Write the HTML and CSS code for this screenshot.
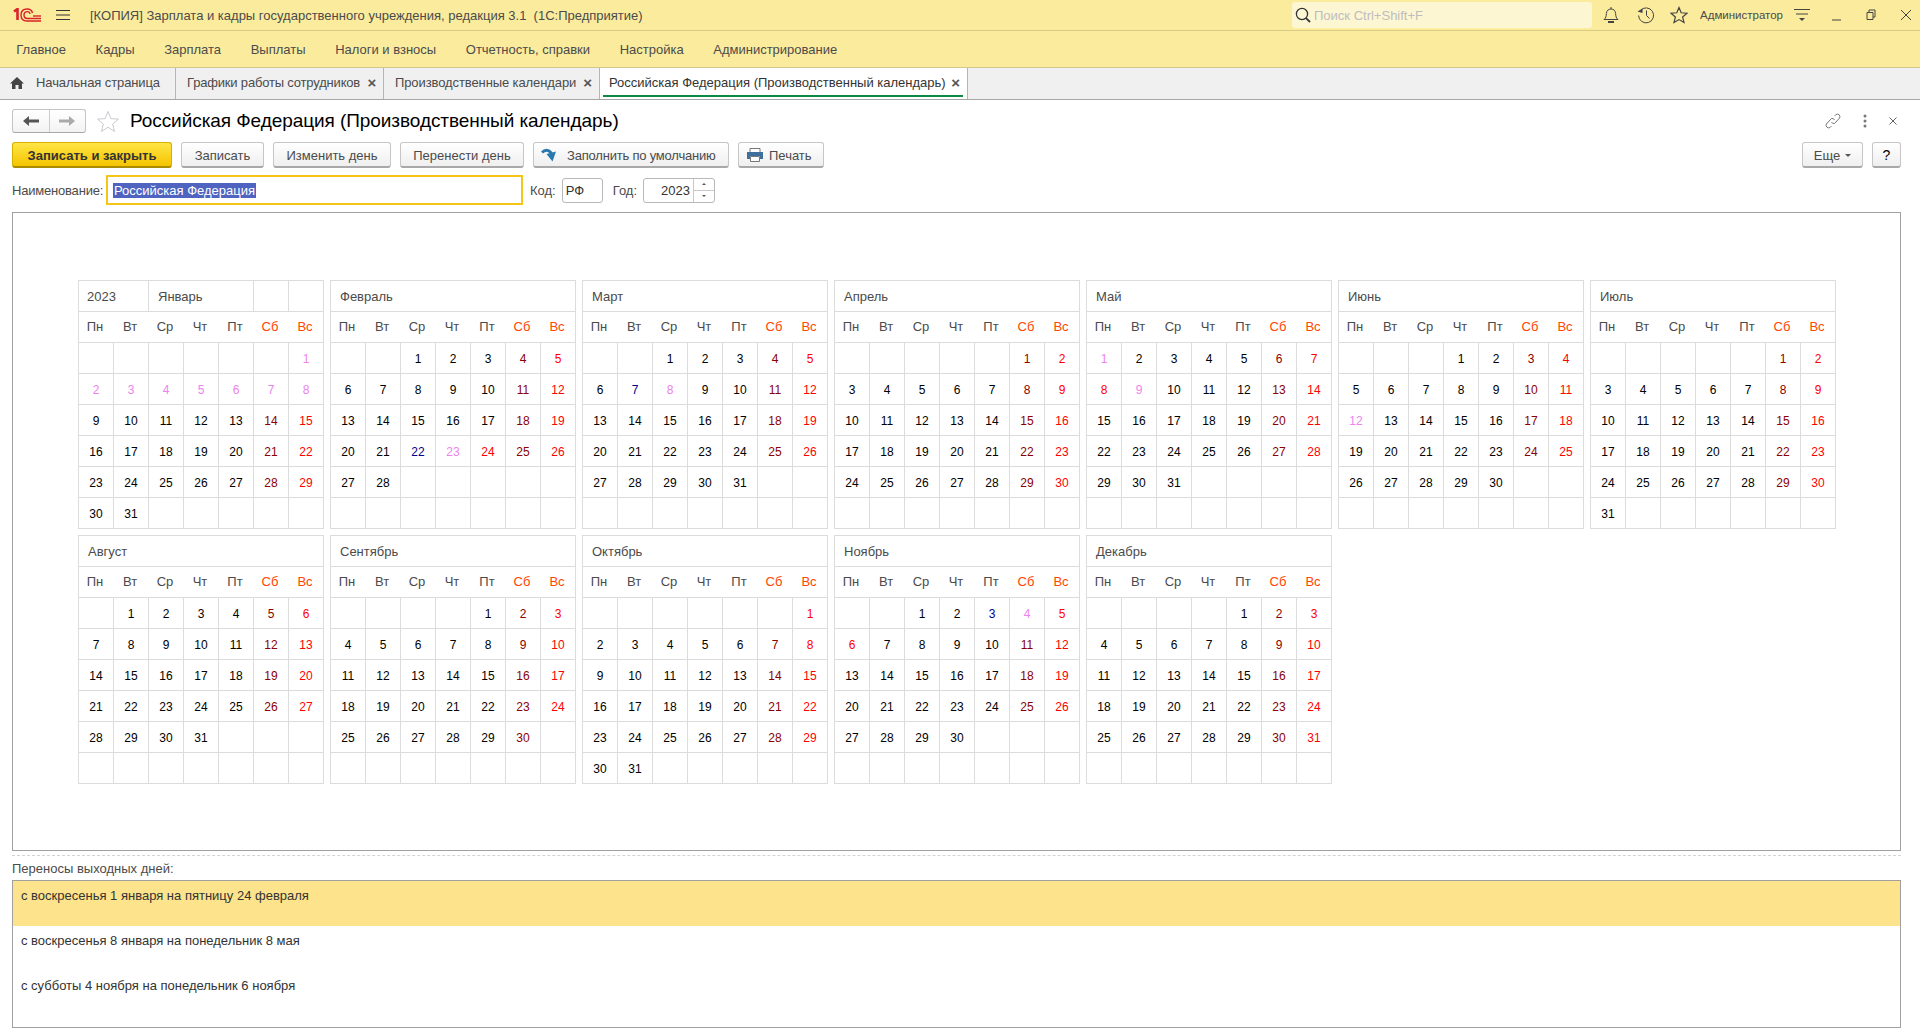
FILE: index.html
```html
<!DOCTYPE html>
<html lang="ru">
<head>
    <meta charset="UTF-8">
    <title>Российская Федерация (Производственный календарь)</title>
    <link rel="stylesheet" href="styles.css">
</head>
<body>
<div class="titlebar">
    <svg class="logo" viewBox="0 0 29 14" width="29" height="14" fill="none" stroke="#d8232a">
        <path d="M1 3.5 L4.5 1 V12" stroke-width="2.6"/>
        <path d="M28 13 H14 C9.5 13 8 10 8 7 C8 3 10.5 1 14 1 C17 1 19 2.5 19.5 5" stroke-width="1.4"/>
        <path d="M28 10.5 H14.5 C12 10.5 11 9 11 7 C11 5 12.3 3.6 14.4 3.6 C16 3.6 16.8 4.6 17 6" stroke-width="1.4"/>
        <path d="M20 8 H28" stroke-width="1.4"/>
    </svg>
    <svg class="burger" viewBox="0 0 14 12" width="14" height="12" stroke="#333">
        <path d="M0 1.5 H14 M0 6 H14 M0 10.5 H14"/>
    </svg>
    <span class="apptitle">[КОПИЯ] Зарплата и кадры государственного учреждения, редакция 3.1&nbsp; (1С:Предприятие)</span>
    <div class="search">
        <svg viewBox="0 0 16 16" width="16" height="16" fill="none" stroke="#333" stroke-width="1.3">
            <circle cx="7" cy="7" r="5.6"/><path d="M11 11.2 L15 15" stroke-width="1.8"/>
        </svg>
        <span>Поиск Ctrl+Shift+F</span>
    </div>
    <div class="sysicons">
        <svg class="bell" viewBox="0 0 16 18" width="16" height="18" fill="none" stroke="#444">
            <path d="M1 13.5 H15 C13 12 12.8 10 12.6 7.5 C12.4 4.5 10.5 3 8 3 C5.5 3 3.6 4.5 3.4 7.5 C3.2 10 3 12 1 13.5 Z M8 1 V3"/>
            <path d="M5 16 H11" stroke-width="2"/>
        </svg>
        <svg viewBox="0 0 18 18" width="18" height="18" fill="none" stroke="#444">
            <path d="M3.4 4.5 A7.5 7.5 0 1 1 1.6 9.5 M9.5 4.5 V9.5 L12.5 12.5"/>
            <path d="M0.5 5.5 L5.5 2.5 V7 Z" fill="#444" stroke="none"/>
        </svg>
        <svg viewBox="0 0 18 18" width="18" height="18" fill="none" stroke="#444" stroke-width="1.2">
            <path d="M9 1.5 L11.2 6.8 L17 7.2 L12.6 11 L14 16.6 L9 13.6 L4 16.6 L5.4 11 L1 7.2 L6.8 6.8 Z"/>
        </svg>
    </div>
    <span class="username">Администратор</span>
    <svg class="usermenu" viewBox="0 0 16 14" width="16" height="14" stroke="#444">
        <path d="M0 1.5 H16 M2 6 H14"/><path d="M5 10 H11 L8 13 Z" fill="#444" stroke="none"/>
    </svg>
    <div class="winbtns">
        <svg viewBox="0 0 10 12" width="10" height="12" stroke="#444"><path d="M0 11 H9"/></svg>
        <svg viewBox="0 0 10 12" width="10" height="12" fill="none" stroke="#444"><path d="M3 3 V1 H9 V8 H7 M1 3.5 H7 V10.5 H1 Z"/></svg>
        <svg viewBox="0 0 12 12" width="12" height="12" stroke="#444"><path d="M1 1 L11 11 M11 1 L1 11"/></svg>
    </div>
</div>

<div class="menubar">
    <a>Главное</a>
    <a>Кадры</a>
    <a>Зарплата</a>
    <a>Выплаты</a>
    <a>Налоги и взносы</a>
    <a>Отчетность, справки</a>
    <a>Настройка</a>
    <a>Администрирование</a>
</div>

<div class="tabs">
    <div class="tab home">
        <svg viewBox="0 0 14 12" width="14" height="12" fill="#444"><path d="M7 0 L14 6.5 H12 V12 H8.5 V8 H5.5 V12 H2 V6.5 H0 Z"/></svg>
        <span>Начальная страница</span>
    </div>
    <div class="tab t-schedules"><span>Графики работы сотрудников</span><b class="tabx">×</b></div>
    <div class="tab t-calendars"><span>Производственные календари</span><b class="tabx">×</b></div>
    <div class="tab active"><span>Российская Федерация (Производственный календарь)</span><b class="tabx">×</b></div>
</div>

<div class="page">
    <div class="headrow">
        <div class="navbtns">
            <span class="navbtn">
                <svg viewBox="0 0 16 10" width="16" height="10" fill="#555"><path d="M0 5 L6 0 V3.5 H16 V6.5 H6 V10 Z"/></svg>
            </span>
            <span class="navbtn">
                <svg viewBox="0 0 16 10" width="16" height="10" fill="#aaa"><path d="M16 5 L10 0 V3.5 H0 V6.5 H10 V10 Z"/></svg>
            </span>
        </div>
        <svg class="favstar" viewBox="0 0 24 24" width="24" height="23" fill="none" stroke="#c4c8cc">
            <path d="M12 1.5 L15 9 L23 9.5 L16.8 14.6 L18.8 22.4 L12 18 L5.2 22.4 L7.2 14.6 L1 9.5 L9 9 Z"/>
        </svg>
        <h1>Российская Федерация (Производственный календарь)</h1>
        <div class="formicons">
            <svg viewBox="0 0 16 16" width="16" height="16" fill="none" stroke="#777">
                <path d="M9.5 3 L11 1.5 A2.6 2.6 0 0 1 14.6 5 L9.5 10.5 A2.6 2.6 0 0 1 6.5 9 M6.5 13 L5 14.5 A2.6 2.6 0 0 1 1.4 11 L6.5 5.5 A2.6 2.6 0 0 1 9.5 7"/>
            </svg>
            <svg viewBox="0 0 4 14" width="4" height="14" fill="#777">
                <circle cx="2" cy="2" r="1.5"/><circle cx="2" cy="7" r="1.5"/><circle cx="2" cy="12" r="1.5"/>
            </svg>
            <svg viewBox="0 0 8 8" width="8" height="8" stroke="#666"><path d="M0.5 0.5 L7.5 7.5 M7.5 0.5 L0.5 7.5"/></svg>
        </div>
    </div>

    <div class="toolbar">
        <button class="btn primary w-save">Записать и закрыть</button>
        <button class="btn w-write">Записать</button>
        <button class="btn w-change">Изменить день</button>
        <button class="btn w-move">Перенести день</button>
        <button class="btn w-fill">
            <svg viewBox="0 0 16 14" width="16" height="14" fill="none">
                <path d="M1 4.5 C4 1.5 8 1.5 10.5 5.5" stroke="#2a78b0" stroke-width="3"/>
                <path d="M5.5 6 L15 3.5 L11.5 13.5 Z" fill="#2a78b0"/>
            </svg>
            Заполнить по умолчанию
        </button>
        <button class="btn w-print">
            <svg viewBox="0 0 16 14" width="16" height="14"><path d="M3 0.5 H13 V5 H3 Z" fill="#fff" stroke="#777"/><path d="M0 4 H16 V11 H13 V8 H3 V11 H0 Z" fill="#3f6f9c"/><path d="M3.5 8.5 H12.5 V13.5 H3.5 Z" fill="#fff" stroke="#777"/></svg>
            Печать
        </button>
        <div class="toolright">
            <button class="btn w-more">Еще <i class="caret"></i></button>
            <button class="btn w-help">?</button>
        </div>
    </div>

    <div class="fields">
        <label class="namelabel">Наименование:</label>
        <div class="input name"><span class="selected">Российская Федерация</span></div>
        <label class="code">Код:</label>
        <div class="input short">РФ</div>
        <label class="year">Год:</label>
        <div class="input spin">
            <span class="spinval">2023</span>
            <span class="spinbtns"><i class="up"></i><i class="down"></i></span>
        </div>
    </div>

    <div class="calframe">
        <div class="months">
            <table class="month">
                <tr class="head"><th colspan="2">2023<th colspan="3">Январь<th><th>
                <tr class="days"><th>Пн<th>Вт<th>Ср<th>Чт<th>Пт<th>Сб<th>Вс
                <tr><td><td><td><td><td><td><td class="h">1
                <tr><td class="h">2<td class="h">3<td class="h">4<td class="h">5<td class="h">6<td class="h">7<td class="h">8
                <tr><td>9<td>10<td>11<td>12<td>13<td>14<td>15
                <tr><td>16<td>17<td>18<td>19<td>20<td>21<td>22
                <tr><td>23<td>24<td>25<td>26<td>27<td>28<td>29
                <tr><td>30<td>31<td><td><td><td><td>
            </table>
            <table class="month">
                <tr class="head"><th colspan="7">Февраль
                <tr class="days"><th>Пн<th>Вт<th>Ср<th>Чт<th>Пт<th>Сб<th>Вс
                <tr><td><td><td>1<td>2<td>3<td>4<td>5
                <tr><td>6<td>7<td>8<td>9<td>10<td>11<td>12
                <tr><td>13<td>14<td>15<td>16<td>17<td>18<td>19
                <tr><td>20<td>21<td class="t">22<td class="h">23<td class="r">24<td>25<td>26
                <tr><td>27<td>28<td><td><td><td><td>
                <tr><td><td><td><td><td><td><td>
            </table>
            <table class="month">
                <tr class="head"><th colspan="7">Март
                <tr class="days"><th>Пн<th>Вт<th>Ср<th>Чт<th>Пт<th>Сб<th>Вс
                <tr><td><td><td>1<td>2<td>3<td>4<td>5
                <tr><td>6<td class="t">7<td class="h">8<td>9<td>10<td>11<td>12
                <tr><td>13<td>14<td>15<td>16<td>17<td>18<td>19
                <tr><td>20<td>21<td>22<td>23<td>24<td>25<td>26
                <tr><td>27<td>28<td>29<td>30<td>31<td><td>
                <tr><td><td><td><td><td><td><td>
            </table>
            <table class="month">
                <tr class="head"><th colspan="7">Апрель
                <tr class="days"><th>Пн<th>Вт<th>Ср<th>Чт<th>Пт<th>Сб<th>Вс
                <tr><td><td><td><td><td><td>1<td>2
                <tr><td>3<td>4<td>5<td>6<td>7<td>8<td>9
                <tr><td>10<td>11<td>12<td>13<td>14<td>15<td>16
                <tr><td>17<td>18<td>19<td>20<td>21<td>22<td>23
                <tr><td>24<td>25<td>26<td>27<td>28<td>29<td>30
                <tr><td><td><td><td><td><td><td>
            </table>
            <table class="month">
                <tr class="head"><th colspan="7">Май
                <tr class="days"><th>Пн<th>Вт<th>Ср<th>Чт<th>Пт<th>Сб<th>Вс
                <tr><td class="h">1<td>2<td>3<td>4<td>5<td>6<td>7
                <tr><td class="r">8<td class="h">9<td>10<td>11<td>12<td>13<td>14
                <tr><td>15<td>16<td>17<td>18<td>19<td>20<td>21
                <tr><td>22<td>23<td>24<td>25<td>26<td>27<td>28
                <tr><td>29<td>30<td>31<td><td><td><td>
                <tr><td><td><td><td><td><td><td>
            </table>
            <table class="month">
                <tr class="head"><th colspan="7">Июнь
                <tr class="days"><th>Пн<th>Вт<th>Ср<th>Чт<th>Пт<th>Сб<th>Вс
                <tr><td><td><td><td>1<td>2<td>3<td>4
                <tr><td>5<td>6<td>7<td>8<td>9<td>10<td>11
                <tr><td class="h">12<td>13<td>14<td>15<td>16<td>17<td>18
                <tr><td>19<td>20<td>21<td>22<td>23<td>24<td>25
                <tr><td>26<td>27<td>28<td>29<td>30<td><td>
                <tr><td><td><td><td><td><td><td>
            </table>
            <table class="month">
                <tr class="head"><th colspan="7">Июль
                <tr class="days"><th>Пн<th>Вт<th>Ср<th>Чт<th>Пт<th>Сб<th>Вс
                <tr><td><td><td><td><td><td>1<td>2
                <tr><td>3<td>4<td>5<td>6<td>7<td>8<td>9
                <tr><td>10<td>11<td>12<td>13<td>14<td>15<td>16
                <tr><td>17<td>18<td>19<td>20<td>21<td>22<td>23
                <tr><td>24<td>25<td>26<td>27<td>28<td>29<td>30
                <tr><td>31<td><td><td><td><td><td>
            </table>
            <table class="month">
                <tr class="head"><th colspan="7">Август
                <tr class="days"><th>Пн<th>Вт<th>Ср<th>Чт<th>Пт<th>Сб<th>Вс
                <tr><td><td>1<td>2<td>3<td>4<td>5<td>6
                <tr><td>7<td>8<td>9<td>10<td>11<td>12<td>13
                <tr><td>14<td>15<td>16<td>17<td>18<td>19<td>20
                <tr><td>21<td>22<td>23<td>24<td>25<td>26<td>27
                <tr><td>28<td>29<td>30<td>31<td><td><td>
                <tr><td><td><td><td><td><td><td>
            </table>
            <table class="month">
                <tr class="head"><th colspan="7">Сентябрь
                <tr class="days"><th>Пн<th>Вт<th>Ср<th>Чт<th>Пт<th>Сб<th>Вс
                <tr><td><td><td><td><td>1<td>2<td>3
                <tr><td>4<td>5<td>6<td>7<td>8<td>9<td>10
                <tr><td>11<td>12<td>13<td>14<td>15<td>16<td>17
                <tr><td>18<td>19<td>20<td>21<td>22<td>23<td>24
                <tr><td>25<td>26<td>27<td>28<td>29<td>30<td>
                <tr><td><td><td><td><td><td><td>
            </table>
            <table class="month">
                <tr class="head"><th colspan="7">Октябрь
                <tr class="days"><th>Пн<th>Вт<th>Ср<th>Чт<th>Пт<th>Сб<th>Вс
                <tr><td><td><td><td><td><td><td>1
                <tr><td>2<td>3<td>4<td>5<td>6<td>7<td>8
                <tr><td>9<td>10<td>11<td>12<td>13<td>14<td>15
                <tr><td>16<td>17<td>18<td>19<td>20<td>21<td>22
                <tr><td>23<td>24<td>25<td>26<td>27<td>28<td>29
                <tr><td>30<td>31<td><td><td><td><td>
            </table>
            <table class="month">
                <tr class="head"><th colspan="7">Ноябрь
                <tr class="days"><th>Пн<th>Вт<th>Ср<th>Чт<th>Пт<th>Сб<th>Вс
                <tr><td><td><td>1<td>2<td class="t">3<td class="h">4<td>5
                <tr><td class="r">6<td>7<td>8<td>9<td>10<td>11<td>12
                <tr><td>13<td>14<td>15<td>16<td>17<td>18<td>19
                <tr><td>20<td>21<td>22<td>23<td>24<td>25<td>26
                <tr><td>27<td>28<td>29<td>30<td><td><td>
                <tr><td><td><td><td><td><td><td>
            </table>
            <table class="month">
                <tr class="head"><th colspan="7">Декабрь
                <tr class="days"><th>Пн<th>Вт<th>Ср<th>Чт<th>Пт<th>Сб<th>Вс
                <tr><td><td><td><td><td>1<td>2<td>3
                <tr><td>4<td>5<td>6<td>7<td>8<td>9<td>10
                <tr><td>11<td>12<td>13<td>14<td>15<td>16<td>17
                <tr><td>18<td>19<td>20<td>21<td>22<td>23<td>24
                <tr><td>25<td>26<td>27<td>28<td>29<td>30<td>31
                <tr><td><td><td><td><td><td><td>
            </table>
        </div>
    </div>

    <div class="splitter"></div>
    <div class="listlabel">Переносы выходных дней:</div>
    <div class="movelist">
        <div class="moverow current">с воскресенья 1 января на пятницу 24 февраля</div>
        <div class="moverow">с воскресенья 8 января на понедельник 8 мая</div>
        <div class="moverow">с субботы 4 ноября на понедельник 6 ноября</div>
    </div>
</div>
</body>
</html>
```

FILE: styles.css
```css
* {
    box-sizing: border-box;
}

html, body {
    margin: 0;
    height: 100%;
    overflow: hidden;
}

body {
    font-family: "Liberation Sans", Arial, sans-serif;
    font-size: 13px;
    color: #4b4b4b;
    background: #fff;
}

/* top bars */
.titlebar {
    display: flex;
    align-items: center;
    height: 31px;
    background: #fbeb9d;
    border-bottom: 1px solid #d8ca85;
}
.logo {
    margin-left: 13px;
}
.burger {
    margin-left: 14px;
}
.apptitle {
    margin-left: 20px;
}
.search {
    display: flex;
    align-items: center;
    gap: 3px;
    width: 300px;
    height: 26px;
    margin-left: auto;
    padding-left: 3px;
    background: #fdf6d3;
    border-radius: 3px;
    color: #bdbdbd;
}
.sysicons {
    display: flex;
    align-items: center;
    gap: 15.5px;
    margin-left: 11px;
}
.sysicons .bell {
    margin-right: 2px;
}
.username {
    margin-left: 12px;
    font-size: 11.5px;
}
.usermenu {
    margin-left: 11px;
}
.winbtns {
    display: flex;
    align-items: center;
    gap: 24px;
    margin-left: 22px;
    margin-right: 8px;
}

.menubar {
    display: flex;
    height: 37px;
    padding-left: 1.5px;
    background: #fbeb9d;
    border-bottom: 1px solid #d0c78f;
    align-items: center;
}
.menubar a {
    padding: 0 14.8px;
}

.tabs {
    display: flex;
    height: 32px;
    background: #f0f0f0;
    border-bottom: 1px solid #a6a6a6;
}
.tab {
    display: flex;
    align-items: center;
    justify-content: space-between;
    padding: 0 7px 2px 11px;
    border-right: 1px solid #b5b5b5;
}
.tab.home {
    justify-content: flex-start;
    gap: 12px;
    width: 176px;
    padding-left: 10px;
    letter-spacing: -0.1px;
}
.tab.t-schedules {
    width: 208px;
    letter-spacing: -0.18px;
}
.tab.t-calendars {
    width: 216px;
    letter-spacing: -0.1px;
}
.tab.active {
    position: relative;
    width: 368px;
    background: #fff;
    padding-left: 9px;
    color: #333;
}
.tab.active::after {
    content: "";
    position: absolute;
    left: 3px;
    right: 4px;
    bottom: 2px;
    height: 2px;
    background: #0b8a45;
}
.tabx {
    font-size: 15px;
    line-height: 12px;
    color: #555;
}

/* form */
.page {
    padding: 0 19px 0 12px;
}
.headrow {
    display: flex;
    align-items: center;
    height: 42px;
}
.navbtns {
    display: flex;
    width: 74px;
    height: 24px;
    border: 1px solid #c4c4c4;
    border-bottom-color: #a8a8a8;
    border-radius: 3px;
    background: linear-gradient(#fff, #f3f3f3);
}
.navbtn {
    display: flex;
    flex: 1;
    align-items: center;
    justify-content: center;
}
.navbtn + .navbtn {
    border-left: 1px solid #ccc;
}
.favstar {
    margin-left: 10px;
}
h1 {
    margin: 0 0 0 10px;
    font-size: 19px;
    font-weight: normal;
    letter-spacing: -0.07px;
    color: #000;
}
.formicons {
    display: flex;
    align-items: center;
    gap: 22px;
    margin-left: auto;
    margin-right: 4px;
}

.toolbar {
    display: flex;
    height: 26px;
    gap: 9px;
}
.btn {
    display: flex;
    align-items: center;
    justify-content: center;
    gap: 8px;
    height: 26px;
    padding: 1px 0 0;
    font: inherit;
    color: #4b4b4b;
    background: linear-gradient(#fff, #efefef);
    border: 1px solid #c6c6c6;
    border-bottom: 2px solid #a9a9a9;
    border-radius: 3px;
}
.btn.primary {
    font-weight: bold;
    color: #333;
    background: linear-gradient(#ffe545, #f5c400);
    border-color: #d5b000;
    border-bottom-color: #a98c00;
}
.w-save { width: 160px; }
.w-write { width: 83px; }
.w-change { width: 118px; }
.w-move { width: 124px; }
.w-fill {
    width: 196px;
    justify-content: flex-start;
    gap: 10px;
    padding-left: 7px;
    letter-spacing: -0.2px;
}
.w-print {
    width: 86px;
    justify-content: flex-start;
    gap: 6px;
    padding-left: 8px;
}
.w-more { width: 61px; gap: 5px; }
.w-help { width: 29px; color: #000; font-size: 14px; }
.caret {
    border: 3px solid transparent;
    border-top: 3px solid #555;
    border-bottom: 0;
}
.toolright {
    display: flex;
    gap: 9px;
    margin-left: auto;
}

.fields {
    display: flex;
    align-items: center;
    height: 30px;
    margin-top: 7px;
}
.namelabel {
    width: 94px;
    letter-spacing: -0.2px;
}
.input {
    display: flex;
    align-items: center;
    height: 25px;
    background: #fff;
    border: 1px solid #b8b8b8;
    border-radius: 3px;
    color: #333;
}
.input.name {
    width: 417px;
    height: 30px;
    padding-left: 5px;
    border: 2px solid #f5c518;
    border-radius: 0;
}
.selected {
    background: #4f63c0;
    color: #fff;
    line-height: 15px;
    padding: 0 1px;
}
.code {
    margin-left: 7px;
}
.input.short {
    width: 41px;
    margin-left: 6px;
    padding-left: 3px;
}
.year {
    margin-left: 10px;
}
.input.spin {
    width: 72px;
    margin-left: 6px;
}
.spinval {
    flex: 1;
    text-align: right;
    padding-right: 3px;
}
.spinbtns {
    display: flex;
    flex-direction: column;
    width: 21px;
    height: 100%;
    border-left: 1px solid #c8c8c8;
}
.spinbtns i {
    display: flex;
    flex: 1;
    align-items: center;
    justify-content: center;
}
.spinbtns .up {
    border-bottom: 1px solid #c8c8c8;
}
.spinbtns i::before {
    content: "";
    border: 2px solid transparent;
}
.spinbtns .up::before {
    border-bottom-color: #555;
    border-top: 0;
}
.spinbtns .down::before {
    border-top-color: #555;
    border-bottom: 0;
}

/* calendar */
.calframe {
    height: 639px;
    margin-top: 7px;
    padding: 67px 0 0 65px;
    border: 1px solid #a0a0a0;
}
.months {
    display: flex;
    flex-wrap: wrap;
    gap: 6px;
}
.month {
    width: 246px;
    height: 249px;
    table-layout: fixed;
    border-collapse: collapse;
    font-size: 13px;
}
.month th, .month td {
    height: 31px;
    padding: 0;
    border: 1px solid #dcdcdc;
    text-align: center;
    font-weight: normal;
}
.month td {
    padding-top: 2px;
    font-size: 12px;
    color: #000;
}
.month .head th {
    padding-left: 9px;
    text-align: left;
    color: #4b4b4b;
}
.month .head th:first-child[colspan="2"] {
    padding-left: 8px;
}
.month .days th {
    padding: 0 2px 2px 0;
    border-left-color: transparent;
    border-right-color: transparent;
    color: #4b4b4b;
}
.month .days th:first-child {
    border-left-color: #dcdcdc;
}
.month .days th:last-child {
    border-right-color: #dcdcdc;
}
.month .days th:nth-child(n+6) {
    color: #ff4500;
}
.month td:nth-child(6) {
    color: #8b0000;
}
.month td:nth-child(7) {
    color: #f00;
}
.month td.h {
    color: #ee82ee;
}
.month td.t {
    color: #00008b;
}
.month td.r {
    color: #f00;
}

/* transfers list */
.splitter {
    height: 1px;
    margin-top: 4px;
    border-top: 1px dashed #d4d4d4;
}
.listlabel {
    margin-top: 4px;
    line-height: 18px;
}
.movelist {
    height: 148px;
    margin-top: 2px;
    border: 1px solid #a0a0a0;
    color: #333;
}
.moverow {
    height: 45px;
    padding: 8px 8px 0;
    line-height: 14px;
}
.moverow.current {
    background: #fde38c;
}
```
